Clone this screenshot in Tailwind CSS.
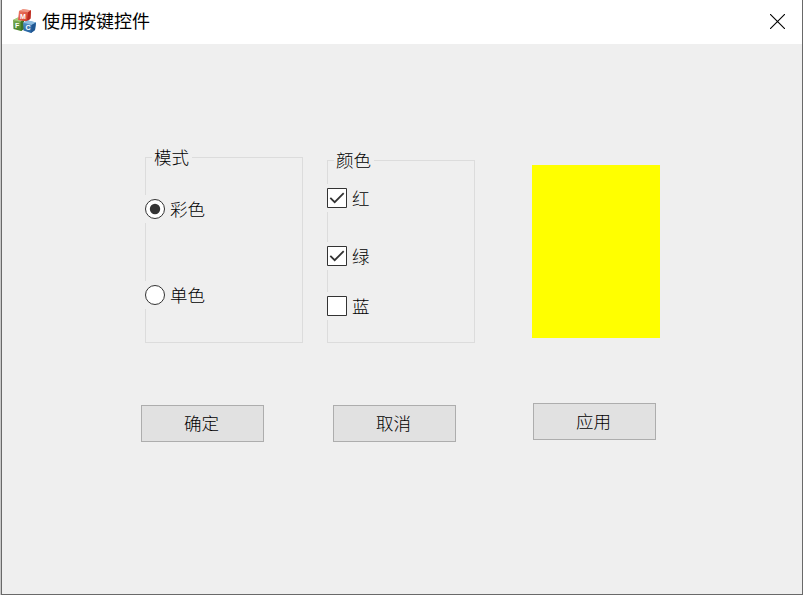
<!DOCTYPE html>
<html lang="zh-CN">
<head>
<meta charset="utf-8">
<title>使用按键控件</title>
<script src="https://cdn.jsdelivr.net/npm/@tailwindcss/browser@4"></script>
</head>
<body class="w-[803px] h-[595px] overflow-hidden bg-[#c8c8c8] pl-px font-['Noto_Sans_CJK_SC',sans-serif] text-black">
<div class="w-[802px] h-[595px] border-x border-b border-[#696969] bg-[#efefef]">
  <header class="flex h-11 items-center bg-white pl-[11px] pr-[17px]">
    <svg class="h-6 w-6 shrink-0 -mt-0.5" viewBox="0 0 24 24">
      <defs>
        <linearGradient id="r" x1="0" y1="0" x2="1" y2="1"><stop offset="0" stop-color="#ee8068"/><stop offset="1" stop-color="#cf3023"/></linearGradient>
        <linearGradient id="g" x1="0" y1="0" x2="0" y2="1"><stop offset="0" stop-color="#86b558"/><stop offset="1" stop-color="#478127"/></linearGradient>
        <linearGradient id="b" x1="0" y1="0" x2="0" y2="1"><stop offset="0" stop-color="#5f9fd0"/><stop offset="1" stop-color="#225f9f"/></linearGradient>
      </defs>
      <path d="M0 11L5 8.500L11 10.500V20L8 22L.5 20Z" fill="url(#g)"/>
      <path d="M0 11L5 8.500L11 10.500L7.500 12.800Z" fill="#a5cc7e"/>
      <path d="M7.500 12.800L11 10.500V20L8 22Z" fill="#3d7424"/>
      <path d="M6 2L10 .3L18 1.200L17.500 9.500L14 12.500L5 11Z" fill="url(#r)"/>
      <path d="M6 2L10 .3L18 1.200L15 3.300Z" fill="#ee9684"/>
      <path d="M15 3.300L18 1.200L17.500 9.500L14 12.500Z" fill="#b92b20"/>
      <path d="M10 13.500L15 11.500L23 13.500L22 21L18 24L10.500 21.500Z" fill="url(#b)"/>
      <path d="M10 13.500L15 11.500L23 13.500L18.500 16Z" fill="#8dbce0"/>
      <path d="M18.500 16L23 13.500L22 21L18 24Z" fill="#215792"/>
      <g fill="#fff" font-family="Liberation Sans,sans-serif" font-weight="bold" font-size="7"><text x="7" y="10">M</text><text x="2" y="18.800">F</text><text x="12.500" y="21.300">C</text></g>
    </svg>
    <h1 class="-mt-1 ml-[5px] text-[18px] leading-6 whitespace-nowrap">使用按键控件</h1>
    <svg class="-mt-0.5 ml-auto h-[15px] w-[15px]" viewBox="0 0 15 15" fill="none" stroke="#000" stroke-width="1.1"><path d="M0 0L15 15M15 0L0 15"/></svg>
  </header>
  <main class="pt-[113px] text-[17.5px] font-light leading-7">
    <div class="flex items-start pl-[143px]">
      <section class="h-[186px] w-[158px] border border-[#dcdcdc]">
        <h2 class="-mt-[14px] ml-1.5 h-7 w-10 bg-[#efefef] pl-0.5 leading-[26px]">模式</h2>
        <label class="-ml-px mt-[23px] flex h-7 w-20 items-center gap-[5px] bg-[#efefef]">
          <svg class="h-5 w-5 shrink-0" viewBox="0 0 20 20"><circle cx="10" cy="10" r="9.500" fill="#fff" stroke="#333"/><circle cx="10" cy="10" r="5.200" fill="#333"/></svg>
          <span>彩色</span>
        </label>
        <label class="-ml-px mt-[58px] flex h-7 w-20 items-center gap-[5px] bg-[#efefef]">
          <svg class="h-5 w-5 shrink-0" viewBox="0 0 20 20"><circle cx="10" cy="10" r="9.500" fill="#fff" stroke="#333"/></svg>
          <span>单色</span>
        </label>
      </section>
      <section class="ml-6 mt-[3px] h-[183px] w-[148px] border border-[#dcdcdc]">
        <h2 class="-mt-[14px] ml-1.5 h-7 w-10 bg-[#efefef] pl-0.5 leading-[26px]">颜色</h2>
        <label class="-ml-px mt-[9px] flex h-7 w-16 items-center gap-[5px] bg-[#efefef]">
          <svg class="h-5 w-5 shrink-0" viewBox="0 0 20 20"><path d="M.5 .5H19.500V19.500H.5Z" fill="#fff" stroke="#333"/><path d="M3.300 9.800L7.700 14.200L16.700 5.200" fill="none" stroke="#333" stroke-width="1.800"/></svg>
          <span>红</span>
        </label>
        <label class="-ml-px mt-[30px] flex h-7 w-16 items-center gap-[5px] bg-[#efefef]">
          <svg class="h-5 w-5 shrink-0" viewBox="0 0 20 20"><path d="M.5 .5H19.500V19.500H.5Z" fill="#fff" stroke="#333"/><path d="M3.300 9.800L7.700 14.200L16.700 5.200" fill="none" stroke="#333" stroke-width="1.800"/></svg>
          <span>绿</span>
        </label>
        <label class="-ml-px mt-[22px] flex h-7 w-16 items-center gap-[5px] bg-[#efefef]">
          <svg class="h-5 w-5 shrink-0" viewBox="0 0 20 20"><path d="M.5 .5H19.500V19.500H.5Z" fill="#fff" stroke="#333"/></svg>
          <span>蓝</span>
        </label>
      </section>
      <div class="ml-[57px] mt-2 h-[173px] w-32 bg-[#ffff00]"></div>
    </div>
    <div class="mt-[60px] flex items-start pl-[139px]">
      <button class="mt-0.5 h-[37px] w-[123px] border border-[#adadad] bg-[#e1e1e1] pb-0.5 pr-0.5">确定</button>
      <button class="ml-[69px] mt-0.5 h-[37px] w-[123px] border border-[#adadad] bg-[#e1e1e1] pb-0.5 pr-0.5">取消</button>
      <button class="ml-[77px] h-[37px] w-[123px] border border-[#adadad] bg-[#e1e1e1] pb-0.5 pr-0.5">应用</button>
    </div>
  </main>
</div>
</body>
</html>
